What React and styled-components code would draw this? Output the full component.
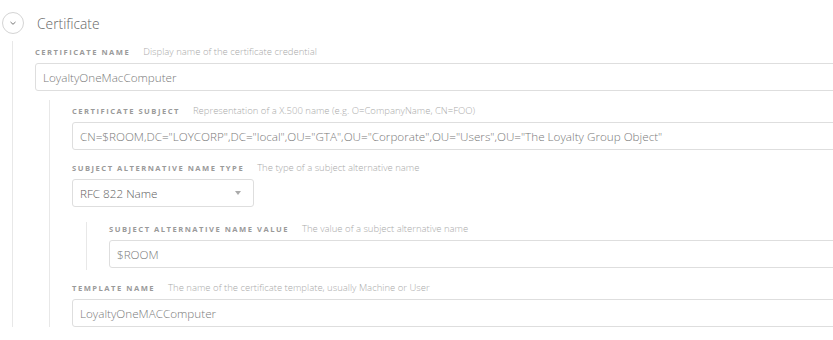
import React from "react";
import styled, { createGlobalStyle } from "styled-components";

const Global = createGlobalStyle`
  html, body { margin: 0; padding: 0; background: #fff; overflow: hidden; }
  body { font-family: "Open Sans", Lato, sans-serif; }
`;

const Page = styled.div`
  width: 860px;
`;

const Header = styled.div`
  display: flex;
  align-items: center;
  height: 41px;
  padding-left: 2px;
  padding-top: 5px;
  box-sizing: border-box;
`;

const Toggle = styled.div`
  width: 22px;
  height: 22px;
  box-sizing: border-box;
  border: 1px solid #d4d4d4;
  border-radius: 50%;
  display: flex;
  align-items: center;
  justify-content: center;
`;

const Title = styled.div`
  margin-left: 13px;
  font-size: 13.8px;
  font-weight: 300;
  color: #666;
`;

const Section = styled.div`
  margin-left: ${(p) => p.$ml}px;
  margin-top: ${(p) => p.$mt || 0}px;
  padding-left: ${(p) => p.$pl}px;
  padding-top: ${(p) => p.$pt || 0}px;
  padding-bottom: ${(p) => p.$pb || 0}px;
  border-left: 1px solid #e8e8e8;
`;

const Field = styled.div`
  margin-top: ${(p) => p.$mt || 0}px;
`;

const LabelRow = styled.div`
  display: flex;
  align-items: baseline;
  height: 12px;
  line-height: 12px;
  margin-bottom: 5px;
  white-space: nowrap;
`;

const LabelName = styled.span`
  font-size: 7.6px;
  font-weight: 700;
  letter-spacing: 1.5px;
  color: #9a9a9a;
  text-transform: uppercase;
`;

const LabelDesc = styled.span`
  margin-left: 13px;
  font-size: 9.5px;
  font-weight: 300;
  color: #aaa;
`;

const Input = styled.div`
  height: 28px;
  box-sizing: border-box;
  border: 1px solid #dedede;
  border-radius: 3px;
  padding-left: 7px;
  display: flex;
  align-items: center;
  font-size: 11.7px;
  font-weight: 300;
  color: #7a7a7a;
  white-space: nowrap;
`;

const Select = styled(Input)`
  width: 182px;
  justify-content: space-between;
  padding-right: 12px;
  color: #5e5e5e;
`;

const Caret = styled.span`
  width: 0;
  height: 0;
  border-left: 3px solid transparent;
  border-right: 3px solid transparent;
  border-top: 4px solid #aaa;
`;

const FormField = ({ name, desc, value, mt }) => (
  <Field $mt={mt}>
    <LabelRow>
      <LabelName>{name}</LabelName>
      <LabelDesc>{desc}</LabelDesc>
    </LabelRow>
    <Input>{value}</Input>
  </Field>
);

export default function App() {
  return (
    <>
      <Global />
      <Page>
        <Header>
          <Toggle>
            <svg width="8" height="6" viewBox="0 0 8 6">
              <path d="M1.5 2 L4 4.3 L6.5 2" fill="none" stroke="#777" strokeWidth="1" />
            </svg>
          </Toggle>
          <Title>Certificate</Title>
        </Header>
        <Section $ml={12} $pl={22} $pt={5}>
          <FormField
            name="Certificate Name"
            desc="Display name of the certificate credential"
            value="LoyaltyOneMacComputer"
          />
          <Section $ml={14} $pl={22} $mt={9} $pt={5}>
            <FormField
              name="Certificate Subject"
              desc="Representation of a X.500 name (e.g. O=CompanyName, CN=FOO)"
              value={'CN=$ROOM,DC="LOYCORP",DC="local",OU="GTA",OU="Corporate",OU="Users",OU="The Loyalty Group Object"'}
            />
            <Field $mt={12}>
              <LabelRow>
                <LabelName>Subject Alternative Name Type</LabelName>
                <LabelDesc>The type of a subject alternative name</LabelDesc>
              </LabelRow>
              <Select>
                RFC 822 Name
                <Caret />
              </Select>
            </Field>
            <Section $ml={14} $pl={22} $mt={15} $pt={1} $pb={2}>
              <FormField
                name="Subject Alternative Name Value"
                desc="The value of a subject alternative name"
                value="$ROOM"
              />
            </Section>
            <FormField
              mt={12}
              name="Template Name"
              desc="The name of the certificate template, usually Machine or User"
              value="LoyaltyOneMACComputer"
            />
          </Section>
        </Section>
      </Page>
    </>
  );
}
